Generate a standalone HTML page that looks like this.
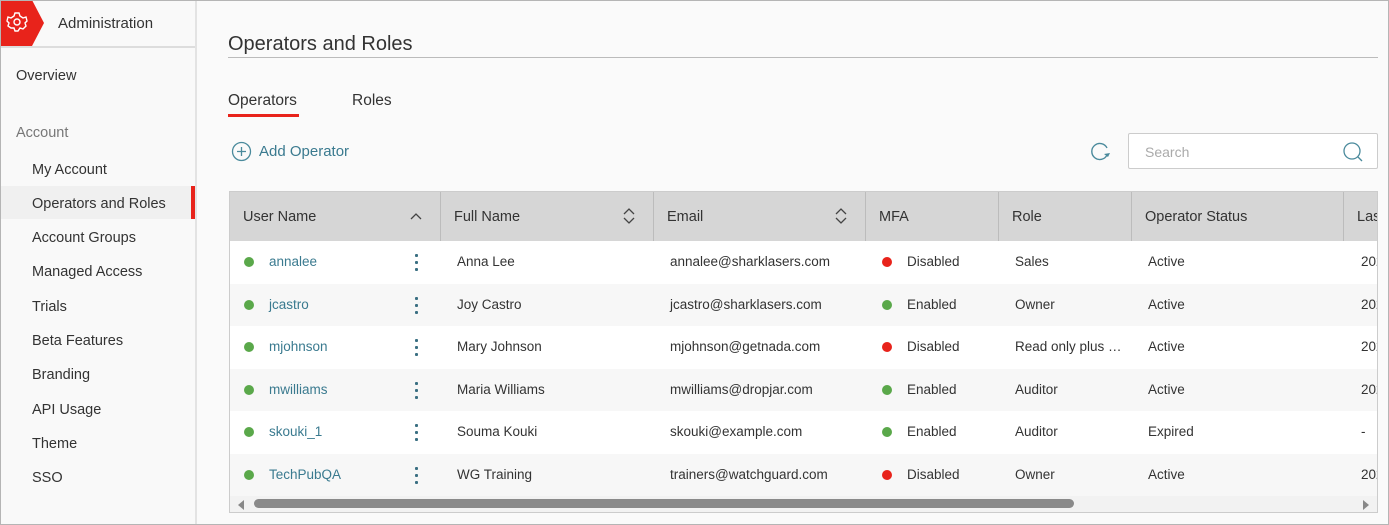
<!DOCTYPE html>
<html><head><style>
*{box-sizing:border-box;margin:0;padding:0}
body{width:1389px;height:525px;overflow:hidden;font-family:"Liberation Sans",sans-serif;background:#fafafa;color:#333;position:relative;font-size:14px}
.frame{position:absolute;inset:0;border:1px solid #b5b5b5;pointer-events:none;z-index:10}
.side{position:absolute;left:0;top:0;width:197px;height:525px;background:#f9f9f9;border-right:2px solid #e3e3e3}
.hdr{height:48px;border-bottom:2px solid #ddd;position:relative}
.hdr .t{position:absolute;left:58px;top:15px;font-size:15px;color:#333}
.nav{position:absolute;font-size:14.5px;color:#333}
.sel{position:absolute;left:0;top:186px;width:195px;height:33px;background:#f0f0f0}
.sel:after{content:"";position:absolute;right:0;top:0;width:4px;height:33px;background:#e8231b}
.a{position:absolute;white-space:nowrap}
.tbl{position:absolute;left:229px;top:191px;width:1149px;height:322px;border:1px solid #ccc;background:#fff;overflow:hidden}
.th{position:absolute;top:0;height:49px;background:#d6d6d6;width:100%}
.th div{position:absolute;top:0;height:49px;border-right:1px solid #bcbcbc;padding:17px 0 0 13px;font-size:14.5px}
.row{position:absolute;left:0;width:100%;height:42.5px}
.row div{position:absolute;top:13px;font-size:13.5px;white-space:nowrap}
.dot{width:10px;height:10px;border-radius:50%;top:16px!important}
.g{background:#5aa84a}.r{background:#e8231b}
.lk{color:#3a7a8f}
.kb{left:185px;top:11px!important;width:3px;height:19px;background:radial-gradient(circle,#3a6f82 1.5px,transparent 1.6px) 0 0/3px 7px repeat-y}
</style></head><body>
<div class="side">
 <div class="hdr">
  <svg width="44" height="46" style="position:absolute;left:0;top:0"><polygon points="0,0 32,0 44,23 32,46 0,46" fill="#e8231b"/>
  <g transform="translate(17,22)" fill="none" stroke="#fff" stroke-width="1.4"><circle r="3"/><path d="M-2,-9 L2,-9 L3,-6 L6,-4 L9,-5 L10,-1 L8,1 L9,4 L6,7 L3,6 L1,9 L-2,9 L-3,6 L-6,6 L-9,4 L-8,1 L-10,-1 L-9,-5 L-6,-4 L-3,-6 Z"/></g></svg>
  <div class="t">Administration</div>
 </div>
 <div class="nav" style="left:16px;top:68px">Overview</div>
 <div class="nav" style="left:16px;top:125px;color:#777">Account</div>
 <div class="sel"></div>
 <div class="nav" style="left:32px;top:162px">My Account</div>
 <div class="nav" style="left:32px;top:196px">Operators and Roles</div>
 <div class="nav" style="left:32px;top:230px">Account Groups</div>
 <div class="nav" style="left:32px;top:264px">Managed Access</div>
 <div class="nav" style="left:32px;top:299px">Trials</div>
 <div class="nav" style="left:32px;top:333px">Beta Features</div>
 <div class="nav" style="left:32px;top:367px">Branding</div>
 <div class="nav" style="left:32px;top:402px">API Usage</div>
 <div class="nav" style="left:32px;top:436px">Theme</div>
 <div class="nav" style="left:32px;top:470px">SSO</div>
</div>
<div class="a" style="left:228px;top:33px;font-size:20px;color:#333">Operators and Roles</div>
<div class="a" style="left:228px;top:57px;width:1150px;height:1px;background:#bbb"></div>
<div class="a" style="left:228px;top:92px;font-size:15.5px">Operators</div>
<div class="a" style="left:228px;top:114px;width:71px;height:3px;background:#e8231b"></div>
<div class="a" style="left:352px;top:92px;font-size:15.5px">Roles</div>
<svg class="a" style="left:231px;top:141px" width="21" height="21"><circle cx="10.5" cy="10.5" r="9" fill="none" stroke="#4a8a9c" stroke-width="1.3"/><path d="M10.5 6v9M6 10.5h9" stroke="#4a8a9c" stroke-width="1.3"/></svg>
<div class="a" style="left:259px;top:143px;font-size:15px;color:#3a7a8f">Add Operator</div>
<svg class="a" style="left:1089px;top:141px" width="24" height="22"><path d="M18 14 A8 8 0 1 1 18 7" fill="none" stroke="#4a8a9c" stroke-width="1.4"/><path d="M15 13 L19 16 L21 12Z" fill="#4a8a9c"/></svg>
<div class="a" style="left:1128px;top:133px;width:250px;height:36px;border:1px solid #ccc;background:#fff;border-radius:2px"></div>
<div class="a" style="left:1145px;top:144px;font-size:14px;color:#aaa">Search</div>
<svg class="a" style="left:1342px;top:141px" width="22" height="22"><circle cx="10" cy="10" r="8" fill="none" stroke="#4a8a9c" stroke-width="1.3"/><path d="M16 16l4 4" stroke="#4a8a9c" stroke-width="1.3"/></svg>
<div class="tbl">
 <div class="th">
  <div style="left:0;width:211px">User Name<svg style="position:absolute;right:18px;top:20px" width="12" height="8"><path d="M1 7l5-5 5 5" fill="none" stroke="#444" stroke-width="1.3"/></svg></div>
  <div style="left:211px;width:213px">Full Name<svg style="position:absolute;right:18px;top:16px" width="12" height="16"><path d="M1 6l5-5 5 5M1 10l5 5 5-5" fill="none" stroke="#444" stroke-width="1.3"/></svg></div>
  <div style="left:424px;width:212px">Email<svg style="position:absolute;right:18px;top:16px" width="12" height="16"><path d="M1 6l5-5 5 5M1 10l5 5 5-5" fill="none" stroke="#444" stroke-width="1.3"/></svg></div>
  <div style="left:636px;width:133px">MFA</div>
  <div style="left:769px;width:133px">Role</div>
  <div style="left:902px;width:212px">Operator Status</div>
  <div style="left:1114px;width:100px;border:none">Las</div>
 </div>
 <div class="row" style="top:49px;background:#fff"><div class="dot g" style="left:14px"></div><div class="lk" style="left:39px">annalee</div><div class="kb"></div><div style="left:227px">Anna Lee</div><div style="left:440px">annalee@sharklasers.com</div><div class="dot r" style="left:652px"></div><div style="left:677px">Disabled</div><div style="left:785px">Sales</div><div style="left:918px">Active</div><div style="left:1131px">202</div></div>
 <div class="row" style="top:91.5px;background:#f7f7f7"><div class="dot g" style="left:14px"></div><div class="lk" style="left:39px">jcastro</div><div class="kb"></div><div style="left:227px">Joy Castro</div><div style="left:440px">jcastro@sharklasers.com</div><div class="dot g" style="left:652px"></div><div style="left:677px">Enabled</div><div style="left:785px">Owner</div><div style="left:918px">Active</div><div style="left:1131px">202</div></div>
 <div class="row" style="top:134px;background:#fff"><div class="dot g" style="left:14px"></div><div class="lk" style="left:39px">mjohnson</div><div class="kb"></div><div style="left:227px">Mary Johnson</div><div style="left:440px">mjohnson@getnada.com</div><div class="dot r" style="left:652px"></div><div style="left:677px">Disabled</div><div style="left:785px">Read only plus …</div><div style="left:918px">Active</div><div style="left:1131px">202</div></div>
 <div class="row" style="top:176.5px;background:#f7f7f7"><div class="dot g" style="left:14px"></div><div class="lk" style="left:39px">mwilliams</div><div class="kb"></div><div style="left:227px">Maria Williams</div><div style="left:440px">mwilliams@dropjar.com</div><div class="dot g" style="left:652px"></div><div style="left:677px">Enabled</div><div style="left:785px">Auditor</div><div style="left:918px">Active</div><div style="left:1131px">202</div></div>
 <div class="row" style="top:219px;background:#fff"><div class="dot g" style="left:14px"></div><div class="lk" style="left:39px">skouki_1</div><div class="kb"></div><div style="left:227px">Souma Kouki</div><div style="left:440px">skouki@example.com</div><div class="dot g" style="left:652px"></div><div style="left:677px">Enabled</div><div style="left:785px">Auditor</div><div style="left:918px">Expired</div><div style="left:1131px">-</div></div>
 <div class="row" style="top:261.5px;background:#f7f7f7"><div class="dot g" style="left:14px"></div><div class="lk" style="left:39px">TechPubQA</div><div class="kb"></div><div style="left:227px">WG Training</div><div style="left:440px">trainers@watchguard.com</div><div class="dot r" style="left:652px"></div><div style="left:677px">Disabled</div><div style="left:785px">Owner</div><div style="left:918px">Active</div><div style="left:1131px">202</div></div>
 <div style="position:absolute;left:0;top:304px;width:100%;height:17px;background:#f2f2f2"></div>
 <div style="position:absolute;left:8px;top:308px;width:0;height:0;border:5px solid transparent;border-right:6px solid #888;border-left:none"></div>
 <div style="position:absolute;left:24px;top:307px;width:820px;height:9px;border-radius:5px;background:#8a8a8a"></div>
 <div style="position:absolute;right:8px;top:308px;width:0;height:0;border:5px solid transparent;border-left:6px solid #888;border-right:none"></div>
</div>
<div class="frame"></div>
</body></html>
